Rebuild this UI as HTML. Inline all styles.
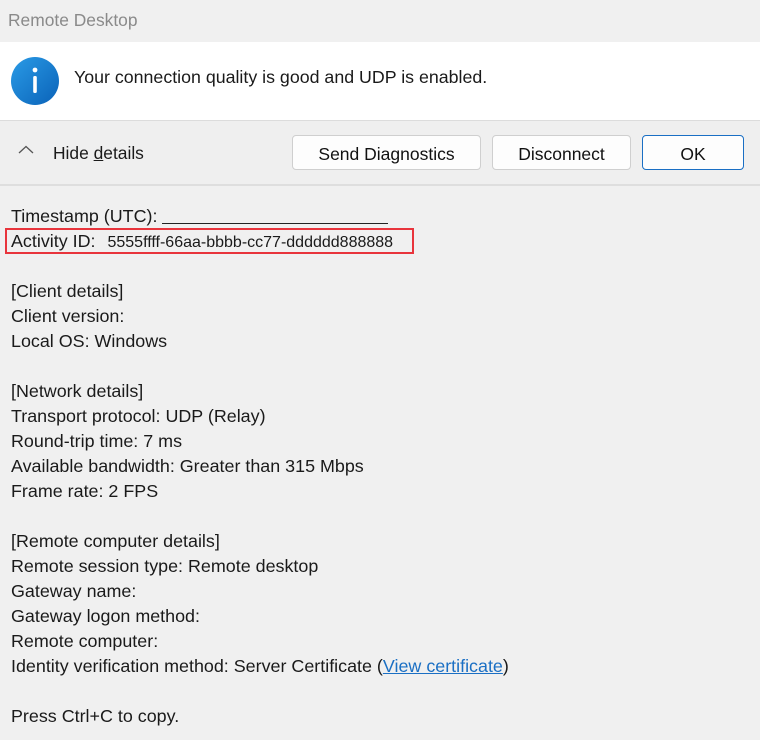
<!DOCTYPE html>
<html><head><style>
body{margin:0;width:760px;height:740px;background:#f0f0f0;font-family:"Liberation Sans",sans-serif;color:#1a1a1a;position:relative;overflow:hidden}
.t{position:absolute;white-space:nowrap}
.title{left:8px;top:10px;font-size:17.4px;color:#8a8a8a}
.white{position:absolute;left:0;top:42px;width:760px;height:78px;background:#fff;border-bottom:1px solid #dcdcdc}
.bar{position:absolute;left:0;top:121px;width:760px;height:63px;background:#efefef;border-bottom:2px solid #dedede}
.btn{position:absolute;top:135px;height:33px;background:#fdfdfd;border:1px solid #cfcfcf;border-radius:4px;font-size:17.5px;text-align:center;line-height:36px;color:#111}
.d{left:11px;font-size:17.9px}
</style></head><body>
<div class="t title">Remote Desktop</div>
<div class="white"></div>
<svg style="position:absolute;left:11px;top:57px" width="48" height="48"><defs><linearGradient id="g" x1="0" y1="0" x2="1" y2="1"><stop offset="0" stop-color="#2a9be6"/><stop offset="1" stop-color="#0a62b8"/></linearGradient></defs><circle cx="24" cy="24" r="24" fill="url(#g)"/><circle cx="24" cy="13" r="2.4" fill="#fff"/><rect x="22.2" y="19" width="3.6" height="17" rx="1.5" fill="#fff"/></svg>
<div class="t" style="left:74px;top:67px;font-size:17.8px">Your connection quality is good and UDP is enabled.</div>
<div class="bar"></div>
<svg style="position:absolute;left:18px;top:145px" width="16" height="10"><path d="M1 8 L8 1.5 L15 8" fill="none" stroke="#555" stroke-width="1.3"/></svg>
<div class="t" style="left:53px;top:143px;font-size:17.4px">Hide <u>d</u>etails</div>
<div class="btn" style="left:292px;width:187px">Send Diagnostics</div>
<div class="btn" style="left:492px;width:137px">Disconnect</div>
<div class="btn" style="left:642px;width:100px;border-color:#1a6fc4">OK</div>
<div class="t d" style="top:206px">Timestamp (UTC): <span style="display:inline-block;width:226px;border-bottom:1px solid #222;height:16px;vertical-align:-2px"></span></div>
<div style="position:absolute;left:5px;top:228px;width:405px;height:22px;border:2px solid #e8343c"></div>
<div class="t d" style="top:231px">Activity ID: <span style="font-size:16px;margin-left:7px">5555ffff-66aa-bbbb-cc77-dddddd888888</span></div>
<div class="t d" style="top:281px">[Client details]</div>
<div class="t d" style="top:306px">Client version:</div>
<div class="t d" style="top:331px">Local OS: Windows</div>
<div class="t d" style="top:381px">[Network details]</div>
<div class="t d" style="top:406px">Transport protocol: UDP (Relay)</div>
<div class="t d" style="top:431px">Round-trip time: 7 ms</div>
<div class="t d" style="top:456px">Available bandwidth: Greater than 315 Mbps</div>
<div class="t d" style="top:481px">Frame rate: 2 FPS</div>
<div class="t d" style="top:531px">[Remote computer details]</div>
<div class="t d" style="top:556px">Remote session type: Remote desktop</div>
<div class="t d" style="top:581px">Gateway name:</div>
<div class="t d" style="top:606px">Gateway logon method:</div>
<div class="t d" style="top:631px">Remote computer:</div>
<div class="t d" style="top:656px">Identity verification method: Server Certificate (<u style="color:#1a6fc4">View certificate</u>)</div>
<div class="t d" style="top:706px">Press Ctrl+C to copy.</div>
</body></html>
